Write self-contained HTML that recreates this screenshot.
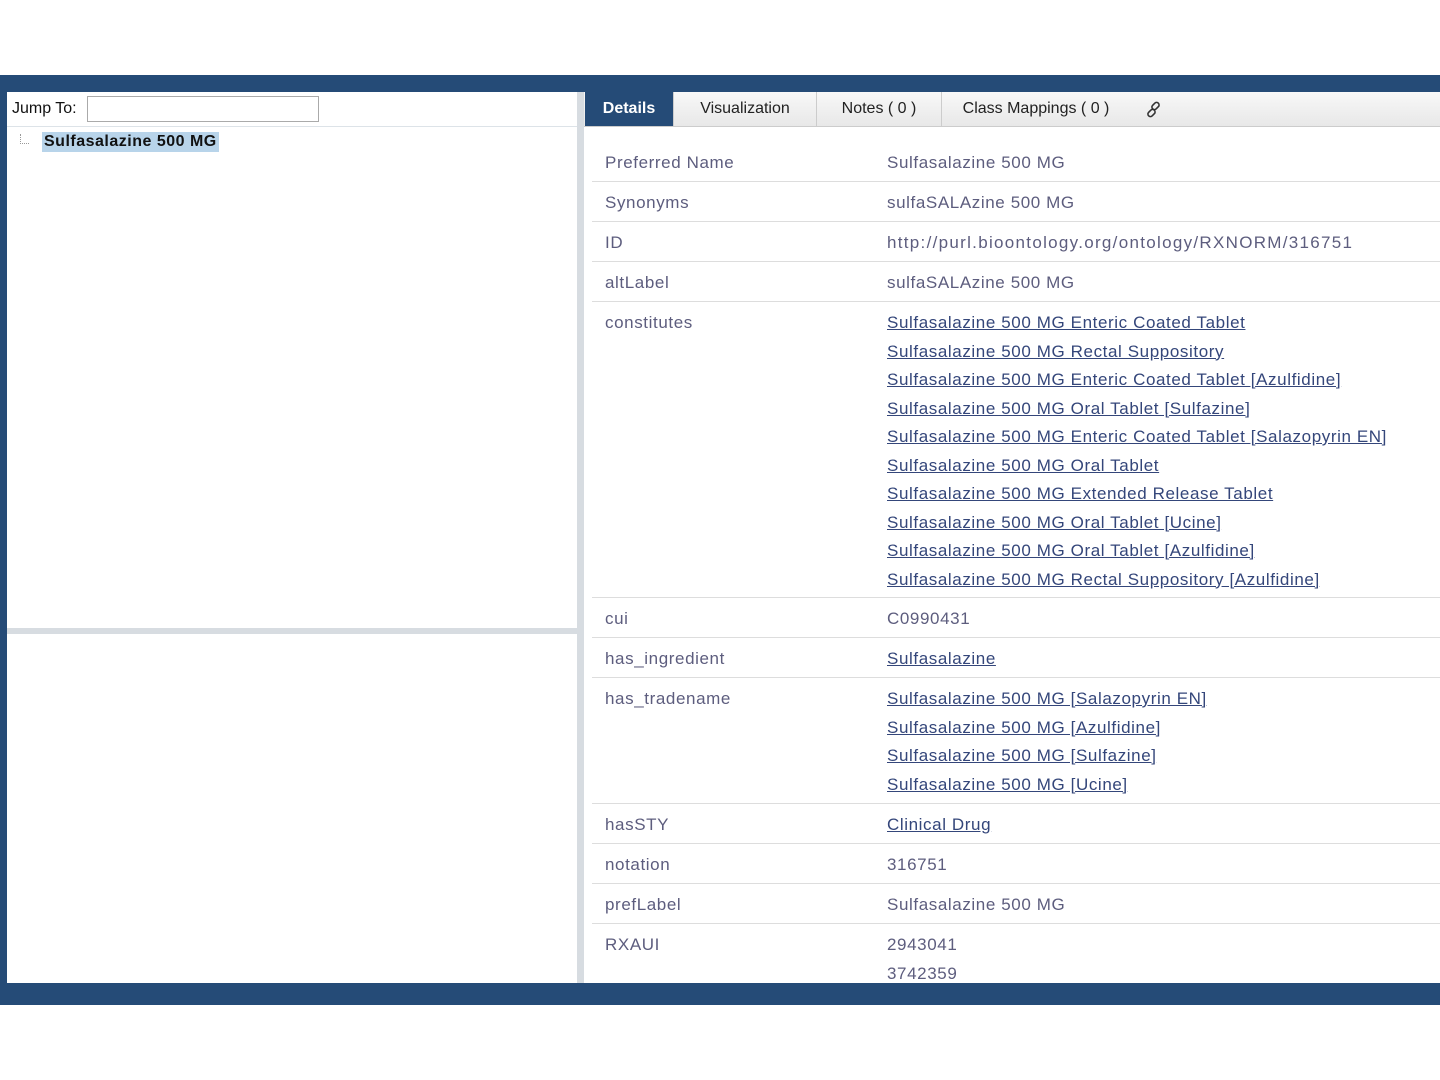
<!DOCTYPE html>
<html><head><meta charset="utf-8"><style>
body{margin:0;width:1440px;height:1080px;background:#fff;position:relative;overflow:hidden;font-family:"Liberation Sans",sans-serif;}
.band{position:absolute;left:0;top:75px;width:1440px;height:930px;background:#254b77;}
.left{position:absolute;left:7px;top:92px;width:570px;height:891px;background:#fff;}
.vbar{position:absolute;left:577px;top:92px;width:7px;height:891px;background:#d7dce1;}
.hbar{position:absolute;left:7px;top:628px;width:570px;height:6px;background:#d7dce1;}
.right{position:absolute;left:584px;top:92px;width:856px;height:891px;background:#fff;overflow:hidden;}
.jump{position:absolute;left:5px;top:8px;font-size:16px;color:#111;}
.inp{position:absolute;left:80px;top:4px;width:230px;height:24px;border:1px solid #aaa;background:#fff;}
.lsep{position:absolute;left:0;top:34px;width:570px;height:1px;background:#dde3e8;}
.node{position:absolute;left:35px;top:40px;background:#b8d4ea;color:#111;font-size:16px;padding:0 2px;line-height:20px;letter-spacing:0.5px;font-weight:bold;}
.tree{position:absolute;left:13px;top:42px;width:8px;height:9px;border-left:1px dotted #999;border-bottom:1px dotted #999;}
.tabs{position:absolute;left:0;top:0;width:856px;height:34px;background:linear-gradient(#f8f8f8,#e8e8e8);border-bottom:1px solid #ccc;}
.tab{position:absolute;top:0;height:34px;line-height:34px;font-size:16px;color:#222;text-align:center;border-right:1px solid #ccc;}
.tab.act{background:#254b77;color:#fff;font-weight:bold;}
.row{position:absolute;left:8px;width:848px;border-bottom:1px solid #ddd;font-size:17px;color:#5d5d7e;letter-spacing:0.6px;}
.row .k{position:absolute;left:13px;top:7px;line-height:28.5px;}
.row .v{position:absolute;left:295px;top:7px;line-height:28.5px;white-space:nowrap;}
.v a{color:#34467a;text-decoration:underline;display:block;}
</style></head><body>
<div class="band"></div>
<div class="left">
<div class="jump">Jump To:</div><div class="inp"></div>
<div class="lsep"></div>
<div class="tree"></div>
<div class="node">Sulfasalazine 500 MG</div>
</div>
<div class="hbar"></div>
<div class="vbar"></div>
<div class="right">
<div class="tabs">
<div class="tab act" style="left:1px;width:88px;">Details</div>
<div class="tab" style="left:90px;width:142px;">Visualization</div>
<div class="tab" style="left:233px;width:124px;">Notes ( 0 )</div>
<div class="tab" style="left:358px;width:188px;border-right:none;">Class Mappings ( 0 )</div>
<svg style="position:absolute;left:560px;top:8px" width="20" height="20" viewBox="0 0 20 20"><g fill="none" stroke="#333" stroke-width="1.6"><rect x="9" y="2" width="5" height="8" rx="2.5" transform="rotate(45 11.5 6)"/><rect x="5" y="9" width="5" height="8" rx="2.5" transform="rotate(45 7.5 13)"/></g></svg>
</div>
<div class="row" style="top:50px;height:39px"><span class="k">Preferred Name</span><span class="v">Sulfasalazine 500 MG</span></div>
<div class="row" style="top:90px;height:39px"><span class="k">Synonyms</span><span class="v">sulfaSALAzine 500 MG</span></div>
<div class="row" style="top:130px;height:39px"><span class="k">ID</span><span class="v" style="letter-spacing:1.3px">http://purl.bioontology.org/ontology/RXNORM/316751</span></div>
<div class="row" style="top:170px;height:39px"><span class="k">altLabel</span><span class="v">sulfaSALAzine 500 MG</span></div>
<div class="row" style="top:210px;height:295px"><span class="k">constitutes</span><span class="v">
<a>Sulfasalazine 500 MG Enteric Coated Tablet</a><a>Sulfasalazine 500 MG Rectal Suppository</a><a>Sulfasalazine 500 MG Enteric Coated Tablet [Azulfidine]</a><a>Sulfasalazine 500 MG Oral Tablet [Sulfazine]</a><a>Sulfasalazine 500 MG Enteric Coated Tablet [Salazopyrin EN]</a><a>Sulfasalazine 500 MG Oral Tablet</a><a>Sulfasalazine 500 MG Extended Release Tablet</a><a>Sulfasalazine 500 MG Oral Tablet [Ucine]</a><a>Sulfasalazine 500 MG Oral Tablet [Azulfidine]</a><a>Sulfasalazine 500 MG Rectal Suppository [Azulfidine]</a></span></div>
<div class="row" style="top:506px;height:39px"><span class="k">cui</span><span class="v">C0990431</span></div>
<div class="row" style="top:546px;height:39px"><span class="k">has_ingredient</span><span class="v"><a>Sulfasalazine</a></span></div>
<div class="row" style="top:586px;height:125px"><span class="k">has_tradename</span><span class="v"><a>Sulfasalazine 500 MG [Salazopyrin EN]</a><a>Sulfasalazine 500 MG [Azulfidine]</a><a>Sulfasalazine 500 MG [Sulfazine]</a><a>Sulfasalazine 500 MG [Ucine]</a></span></div>
<div class="row" style="top:712px;height:39px"><span class="k">hasSTY</span><span class="v"><a>Clinical Drug</a></span></div>
<div class="row" style="top:752px;height:39px"><span class="k">notation</span><span class="v">316751</span></div>
<div class="row" style="top:792px;height:39px"><span class="k">prefLabel</span><span class="v">Sulfasalazine 500 MG</span></div>
<div class="row" style="top:832px;height:100px;border:none"><span class="k">RXAUI</span><span class="v">2943041<br>3742359</span></div>
</div>
</body></html>
